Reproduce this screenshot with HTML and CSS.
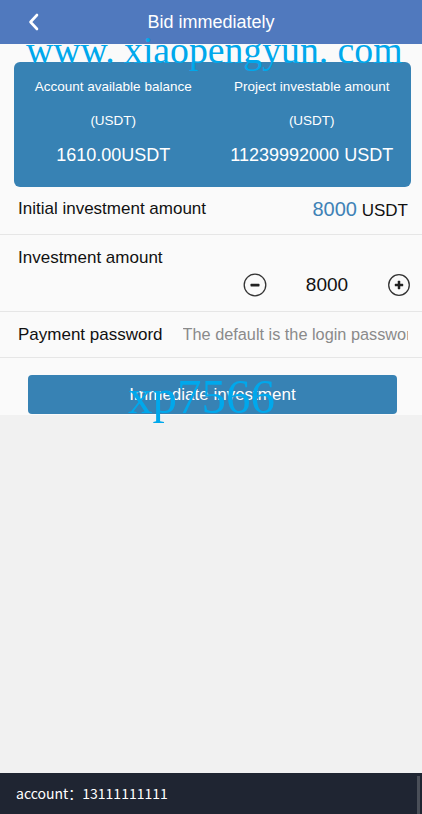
FILE: index.html
```html
<!DOCTYPE html>
<html lang="en">
<head>
  <meta charset="UTF-8" />
  <meta name="viewport" content="width=device-width, initial-scale=1" />
  <title>Bid immediately</title>
  <link rel="stylesheet" href="styles.css">
</head>
<body>

  <header class="topbar">
    <a class="back" href="#">
      <svg width="14" height="18" viewBox="0 0 14 18"><path d="M10 2 L3.5 9 L10 16" fill="none" stroke="#fff" stroke-width="2.6" stroke-linecap="round" stroke-linejoin="round"/></svg>
    </a>
    <h1>Bid immediately</h1>
  </header>

  <main class="content">
    <div class="summary">
      <div class="summary-col">
        <p>Account available balance</p>
        <p>(USDT)</p>
        <p class="big">1610.00USDT</p>
      </div>
      <div class="summary-col">
        <p>Project investable amount</p>
        <p>(USDT)</p>
        <p class="big">11239992000 USDT</p>
      </div>
    </div>

    <div class="row row-first">
      <span>Initial investment amount</span>
      <span><b class="amount">8000</b> <span class="unit">USDT</span></span>
    </div>

    <div class="row row-stack">
      <span>Investment amount</span>
      <div class="stepper">
        <button class="step" type="button">
          <svg width="24" height="24" viewBox="0 0 24 24"><circle cx="12" cy="12" r="10.8" fill="none" stroke="#333" stroke-width="1.3"/><rect x="7.5" y="10.8" width="9" height="2.6" rx="0.6" fill="#222"/></svg>
        </button>
        <span class="qty">8000</span>
        <button class="step" type="button">
          <svg width="24" height="24" viewBox="0 0 24 24"><circle cx="12" cy="12" r="10.3" fill="none" stroke="#333" stroke-width="1.3"/><rect x="7.8" y="10.8" width="8.4" height="2.5" rx="0.6" fill="#222"/><rect x="10.75" y="7.8" width="2.5" height="8.4" rx="0.6" fill="#222"/></svg>
        </button>
      </div>
    </div>

    <div class="row">
      <span class="label">Payment password</span>
      <input class="pwd" type="password" placeholder="The default is the login password" />
    </div>

    <div class="actions">
      <button class="submit" type="button">Immediate investment</button>
    </div>
  </main>

  <footer class="footer">account：13111111111</footer>

  <div class="mark mark-site">www. xiaopengyun. com</div>
  <div class="mark mark-code">xp7566</div>

</body>
</html>
```

FILE: styles.css
```css
body {
  margin: 0;
  font-family: 'Liberation Sans', Arial, sans-serif;
  background: #f1f1f1;
  color: #111;
  min-height: 100vh;
  display: flex;
  flex-direction: column;
  position: relative;
}
.topbar {
  height: 44px;
  background: #5079be;
  display: flex;
  align-items: center;
  justify-content: center;
  position: relative;
}
.topbar h1 {
  margin: 0;
  font-size: 18px;
  font-weight: normal;
  color: #fff;
}
.back {
  position: absolute;
  left: 27px;
  top: 13px;
  display: flex;
}
.content {
  background: #fafafa;
  padding: 18px 0 1px;
}
.summary {
  margin: 0 11px 0 14px;
  background: #3782b4;
  border-radius: 6px;
  padding: 8px 0 15px;
  display: grid;
  grid-template-columns: 1fr 1fr;
  color: #fff;
  text-align: center;
}
.summary p {
  margin: 0;
  font-size: 13.5px;
  line-height: 34px;
}
.summary .big {
  font-size: 18px;
}
.row {
  display: flex;
  align-items: center;
  justify-content: space-between;
  height: 45px;
  padding: 0 14px 0 18px;
  border-bottom: 1px solid #e6e6e6;
  font-size: 17px;
}
.row-first {
  height: 44px;
  padding-bottom: 3px;
  padding-right: 14px;
}
.amount {
  font-weight: normal;
  font-size: 20px;
  color: #3f82b6;
}
.unit {
  font-size: 17px;
}
.row-stack {
  height: 76px;
  flex-direction: column;
  align-items: stretch;
  justify-content: flex-start;
}
.row-stack > span {
  margin-top: 13px;
}
.stepper {
  display: flex;
  align-items: center;
  justify-content: flex-end;
  margin-top: 5px;
  margin-right: -3px;
}
.step {
  background: none;
  border: none;
  padding: 0;
  display: flex;
  cursor: pointer;
}
.qty {
  width: 120px;
  text-align: center;
  font-size: 19px;
}
.label {
  flex: none;
}
.pwd {
  flex: 1;
  min-width: 0;
  margin-left: 20px;
  border: none;
  background: none;
  padding: 0;
  font-family: inherit;
  font-size: 16.3px;
  outline: none;
}
.pwd::placeholder {
  color: #8a8a8a;
}
.actions {
  padding: 17px 25px 0 28px;
}
.submit {
  width: 100%;
  height: 39px;
  background: #3782b4;
  border: none;
  border-radius: 4px;
  color: #fff;
  font-family: inherit;
  font-size: 17px;
  cursor: pointer;
}
.footer {
  margin-top: auto;
  height: 41px;
  background: #1f2532;
  color: #fff;
  font-family: 'Noto Sans CJK SC', 'Noto Sans', sans-serif;
  font-size: 14px;
  line-height: 41px;
  padding-left: 16px;
  position: relative;
}
.footer::after {
  content: '';
  position: absolute;
  right: 2px;
  top: 3px;
  bottom: 0;
  width: 3px;
  background: #4a4f58;
}
.mark {
  position: absolute;
  font-family: 'Liberation Serif', 'Times New Roman', serif;
  color: #00a8ec;
  pointer-events: none;
  white-space: nowrap;
  line-height: 1;
}
.mark-site {
  left: 26px;
  top: 32px;
  font-size: 37.7px;
}
.mark-code {
  left: 128px;
  top: 372px;
  font-size: 49px;
}
```
